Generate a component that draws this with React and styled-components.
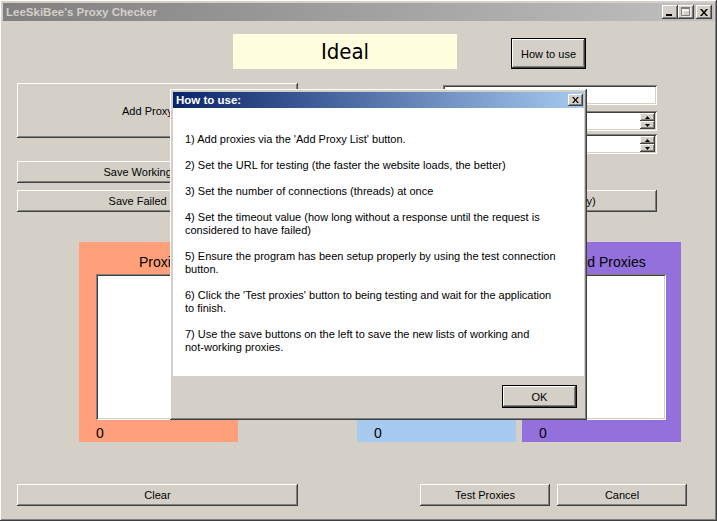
import React from "react";
import styled, { createGlobalStyle, css } from "styled-components";

const Global = createGlobalStyle`
  html, body { margin: 0; padding: 0; background: #d4d0c8; }
  body { width: 717px; height: 521px; overflow: hidden; font-family: "Liberation Sans", Arial, sans-serif; }
  * { box-sizing: border-box; }
`;

const raised = css`
  box-shadow: inset -1px -1px #404040, inset 1px 1px #ffffff, inset -2px -2px #808080, inset 2px 2px #d4d0c8;
`;
const sunken = css`
  box-shadow: inset 1px 1px #808080, inset -1px -1px #ffffff, inset 2px 2px #404040, inset -2px -2px #d4d0c8;
`;

const Window = styled.div`
  position: relative;
  width: 717px;
  height: 521px;
  background: #d4d0c8;
  padding: 3px;
  display: flex;
  flex-direction: column;
  ${raised}
`;

const TitleBar = styled.div`
  height: 18px;
  display: flex;
  align-items: center;
  padding: 0 2px 0 3px;
  background: linear-gradient(to right, ${(p) => p.$from}, ${(p) => p.$to});
`;

const TitleText = styled.span`
  flex: 1;
  font: bold 11.5px "Liberation Sans", Arial, sans-serif;
  color: ${(p) => p.$color};
  white-space: nowrap;
`;

const CapGroup = styled.div`
  display: flex;
  align-items: center;
  gap: ${(p) => p.$gap || 0}px;
`;

const CapBtn = styled.div`
  width: ${(p) => p.$w || 16}px;
  height: ${(p) => p.$h || 14}px;
  background: #d4d0c8;
  display: flex;
  align-items: center;
  justify-content: center;
  ${raised}
`;

const Client = styled.div`
  flex: 1;
  display: flex;
  flex-direction: column;
`;

const TopRow = styled.div`
  display: flex;
  align-items: flex-end;
  margin-top: 13px;
  padding-left: 230px;
`;

const StatusLabel = styled.div`
  width: 224px;
  height: 35px;
  background: #ffffe0;
  display: flex;
  align-items: center;
  justify-content: center;
  font: 22px "DejaVu Sans Condensed", "DejaVu Sans", sans-serif;
  color: #000;
`;

const Button = styled.button`
  width: ${(p) => p.$w}px;
  height: ${(p) => p.$h || 22}px;
  margin: ${(p) => p.$mt || 0}px 0 0 ${(p) => p.$ml || 0}px;
  flex: none;
  background: #d4d0c8;
  border: ${(p) => (p.$default ? "1px solid #000" : "none")};
  padding: 0;
  font: 11px "Liberation Sans", Arial, sans-serif;
  color: #000;
  white-space: nowrap;
  overflow: hidden;
  ${raised}
`;

const MidRow = styled.div`
  display: flex;
  align-items: flex-start;
  margin-top: 14px;
  padding-left: 14px;
`;

const Column = styled.div`
  display: flex;
  flex-direction: column;
  align-items: flex-end;
  width: ${(p) => p.$w}px;
  margin-left: ${(p) => p.$ml || 0}px;
`;

const TextBox = styled.div`
  width: 214px;
  height: 20px;
  margin-top: ${(p) => p.$mt || 0}px;
  background: #fff;
  ${sunken}
`;

const SpinBox = styled.div`
  width: 214px;
  height: 20px;
  margin-top: ${(p) => p.$mt || 0}px;
  background: #fff;
  padding: 2px;
  display: flex;
  justify-content: flex-end;
  ${sunken}
`;

const SpinBtns = styled.div`
  width: 15px;
  display: flex;
  flex-direction: column;
`;

const SpinHalf = styled.div`
  flex: 1;
  background: #d4d0c8;
  display: flex;
  align-items: center;
  justify-content: center;
  ${raised}
`;

const PanelRow = styled.div`
  display: flex;
  margin-top: 30px;
  padding-left: 76px;
`;

const Panel = styled.div`
  width: 159px;
  height: 200px;
  margin-left: ${(p) => p.$ml || 0}px;
  background: ${(p) => p.$bg};
  display: flex;
  flex-direction: column;
  padding-top: 12px;
`;

const PanelLabel = styled.div`
  height: 16px;
  line-height: 16px;
  padding-left: ${(p) => p.$left}px;
  font: 14px "Liberation Sans", Arial, sans-serif;
  color: #000;
  white-space: nowrap;
`;

const ListBox = styled.div`
  width: 127px;
  height: 146px;
  margin: 4px 0 0 17px;
  background: #fff;
  ${sunken}
`;

const Count = styled.div`
  margin: 5px 0 0 17px;
  height: 16px;
  line-height: 16px;
  font: 14px "Liberation Sans", Arial, sans-serif;
  color: #000;
`;

const BottomRow = styled.div`
  display: flex;
  margin-top: 42px;
  padding-left: 14px;
`;

/* dialog */
const Dialog = styled.div`
  position: absolute;
  left: 170px;
  top: 89px;
  width: 417px;
  height: 331px;
  padding: 3px;
  background: #d4d0c8;
  display: flex;
  flex-direction: column;
  ${raised}
`;

const DialogTitle = styled(TitleBar)`
  height: 16px;
  padding: 0 1px 0 3px;
`;

const DialogBody = styled.div`
  height: 268px;
  background: #fff;
  padding: 25px 0 0 12px;
  font: 11px "Liberation Sans", Arial, sans-serif;
  color: #000;
`;

const Para = styled.p`
  margin: 0 0 13px;
  line-height: 13px;
  white-space: nowrap;
`;

const DialogFooter = styled.div`
  flex: 1;
  display: flex;
  justify-content: flex-end;
  align-items: flex-start;
  padding: 9px 7px 0 0;
`;

const MinIcon = () => (
  <svg width="8" height="7" viewBox="0 0 8 7"><rect x="0" y="5" width="6" height="2" fill="#000" /></svg>
);
const MaxIcon = () => (
  <svg width="10" height="10" viewBox="0 0 10 10">
    <path d="M1.5 1.5h8v8h-8z M1 1h9v2H1z" fill="none" stroke="#fff" strokeWidth="1" transform="translate(0.5 0.5)" />
    <path d="M0.5 0.5h8v8h-8z" fill="none" stroke="#808080" strokeWidth="1" />
    <rect x="0" y="0" width="9" height="2" fill="#808080" />
  </svg>
);
const CloseIcon = ({ s = 8 }) => (
  <svg width={s} height={s - 1} viewBox="0 0 8 7">
    <path d="M0 0h2l2 2.5L6 0h2L5 3.5 8 7H6L4 4.5 2 7H0l3-3.5z" fill="#000" />
  </svg>
);
const Arrow = ({ up }) => (
  <svg width="5" height="3" viewBox="0 0 5 3">
    <path d={up ? "M2.5 0L5 3H0z" : "M0 0h5L2.5 3z"} fill="#000" />
  </svg>
);

const Spinner = ({ mt }) => (
  <SpinBox $mt={mt}>
    <SpinBtns>
      <SpinHalf><Arrow up /></SpinHalf>
      <SpinHalf><Arrow /></SpinHalf>
    </SpinBtns>
  </SpinBox>
);

export default function App() {
  return (
    <>
      <Global />
      <Window>
        <TitleBar $from="#808080" $to="#c0c0c0">
          <TitleText $color="#d4d0c8">LeeSkiBee's Proxy Checker</TitleText>
          <CapGroup $gap={2}>
            <CapGroup>
              <CapBtn><MinIcon /></CapBtn>
              <CapBtn><MaxIcon /></CapBtn>
            </CapGroup>
            <CapBtn><CloseIcon /></CapBtn>
          </CapGroup>
        </TitleBar>
        <Client>
          <TopRow>
            <StatusLabel>Ideal</StatusLabel>
            <Button $default $w={75} $h={31} $ml={54}>How to use</Button>
          </TopRow>
          <MidRow>
            <Column $w={281}>
              <Button $w={281} $h={55}>Add Proxy List</Button>
              <Button $w={281} $h={22} $mt={23}>Save Working Proxies</Button>
              <Button $w={281} $h={22} $mt={7}>Save Failed Proxies</Button>
            </Column>
            <Column $w={240} $ml={119}>
              <TextBox $mt={2} />
              <Spinner mt={6} />
              <Spinner mt={3} />
              <Button $w={240} $h={22} $mt={36}>Test Connection (Proxy)</Button>
            </Column>
          </MidRow>
          <PanelRow>
            <Panel $bg="#ffa07a">
              <PanelLabel $left={60}>Proxies</PanelLabel>
              <ListBox />
              <Count>0</Count>
            </Panel>
            <Panel $bg="#a6caf0" $ml={119}>
              <PanelLabel $left={30}>Working Proxies</PanelLabel>
              <ListBox />
              <Count>0</Count>
            </Panel>
            <Panel $bg="#9370db" $ml={6}>
              <PanelLabel $left={35}>Failed Proxies</PanelLabel>
              <ListBox />
              <Count>0</Count>
            </Panel>
          </PanelRow>
          <BottomRow>
            <Button $w={281} $h={22}>Clear</Button>
            <Button $w={130} $h={22} $ml={122}>Test Proxies</Button>
            <Button $w={130} $h={22} $ml={7}>Cancel</Button>
          </BottomRow>
        </Client>

        <Dialog>
          <DialogTitle $from="#0a246a" $to="#a6caf0">
            <TitleText $color="#ffffff">How to use:</TitleText>
            <CapBtn $w={15} $h={12}><CloseIcon s={7} /></CapBtn>
          </DialogTitle>
          <DialogBody>
            <Para>1) Add proxies via the 'Add Proxy List' button.</Para>
            <Para>2) Set the URL for testing (the faster the website loads, the better)</Para>
            <Para>3) Set the number of connections (threads) at once</Para>
            <Para>4) Set the timeout value (how long without a response until the request is<br />considered to have failed)</Para>
            <Para>5) Ensure the program has been setup properly by using the test connection<br />button.</Para>
            <Para>6) Click the 'Test proxies' button to being testing and wait for the application<br />to finish.</Para>
            <Para>7) Use the save buttons on the left to save the new lists of working and<br />not-working proxies.</Para>
          </DialogBody>
          <DialogFooter>
            <Button $default $w={75} $h={23}>OK</Button>
          </DialogFooter>
        </Dialog>
      </Window>
    </>
  );
}
